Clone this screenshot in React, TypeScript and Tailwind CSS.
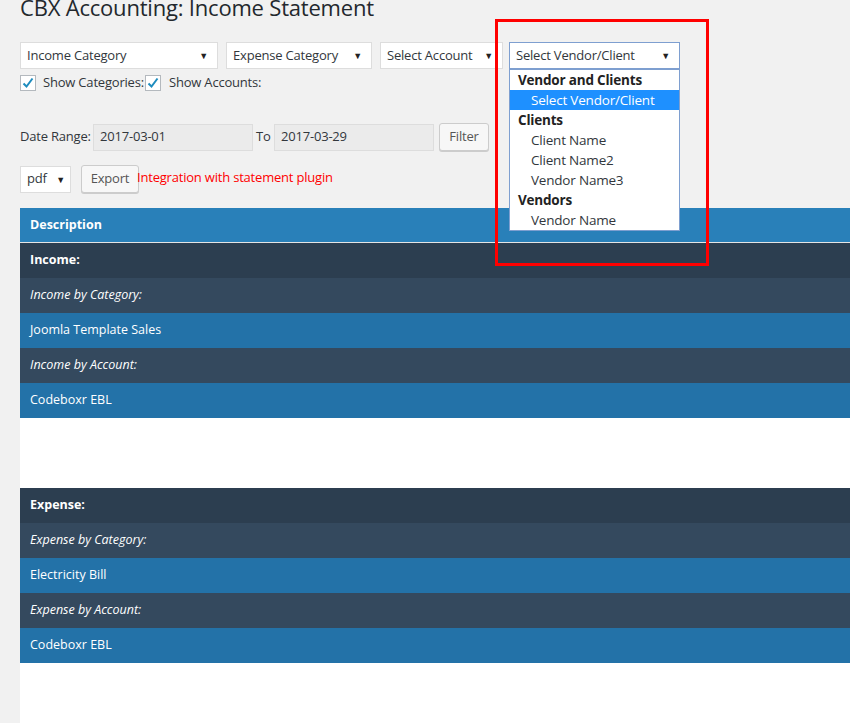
import React from 'react';

const Caret = () => <span className="text-[9px] text-[#222] leading-none">▼</span>;

const Select = ({ label, w, focus }: { label: string; w: string; focus?: boolean }) => (
  <div
    className={`${w} h-[27px] bg-white flex items-center justify-between pl-[6px] pr-[9px] border ${
      focus ? 'border-[#7e9fd0]' : 'border-[#ddd]'
    }`}
  >
    <span className="whitespace-nowrap">{label}</span>
    <Caret />
  </div>
);

const Check = () => (
  <span className="w-4 h-4 shrink-0 bg-white border border-[#b4b9be] flex items-center justify-center">
    <svg width="14" height="14" viewBox="0 0 14 14">
      <path d="M2.5 7.5 L5.5 10.5 L11.5 2.5" fill="none" stroke="#1e8cbe" strokeWidth="2" />
    </svg>
  </span>
);

const rows = [
  { text: 'Income:', kind: 'group' },
  { text: 'Income by Category:', kind: 'sub' },
  { text: 'Joomla Template Sales', kind: 'item' },
  { text: 'Income by Account:', kind: 'sub' },
  { text: 'Codeboxr EBL', kind: 'item' },
  { text: '', kind: 'gap' },
  { text: 'Expense:', kind: 'group' },
  { text: 'Expense by Category:', kind: 'sub' },
  { text: 'Electricity Bill', kind: 'item' },
  { text: 'Expense by Account:', kind: 'sub' },
  { text: 'Codeboxr EBL', kind: 'item' },
];

const rowClass: Record<string, string> = {
  group: 'h-[35px] bg-[#2c3e50] font-bold',
  sub: 'h-[35px] bg-[#34495e] italic',
  item: 'h-[35px] bg-[#2372a8]',
  gap: 'h-[70px] bg-white',
};

const options = [
  { label: 'Vendor and Clients', group: true },
  { label: 'Select Vendor/Client', active: true },
  { label: 'Clients', group: true },
  { label: 'Client Name' },
  { label: 'Client Name2' },
  { label: 'Vendor Name3' },
  { label: 'Vendors', group: true },
  { label: 'Vendor Name' },
];

export default function App() {
  return (
    <div className="relative w-[850px] h-[723px] overflow-hidden bg-[#f1f1f1] font-['Open_Sans',sans-serif] text-[#32373c]">
      <div className="pl-5">
        <h1 className="text-[22px] leading-[29px] -mt-[7px] text-[#23282d] tracking-[-0.2px] whitespace-nowrap">
          CBX Accounting: Income Statement
        </h1>

        <div className="mt-[20px] flex gap-2 text-[13px] tracking-[-0.2px]">
          <Select label="Income Category" w="w-[198px]" />
          <Select label="Expense Category" w="w-[146px]" />
          <Select label="Select Account" w="w-[123px]" />
          <div className="relative ml-[-2px]">
            <Select label="Select Vendor/Client" w="w-[171px]" focus />
            <div className="absolute left-0 top-[27px] w-[171px] bg-white border border-[#7e9fd0] z-10 leading-[20px] text-[13.5px]">
              {options.map((o) => (
                <div
                  key={o.label}
                  className={`h-[20px] ${o.group ? 'pl-[8px] font-bold text-[#222]' : 'pl-[21px]'} ${
                    o.active ? 'bg-[#1e90ff] text-white' : ''
                  }`}
                >
                  {o.label}
                </div>
              ))}
            </div>
          </div>
        </div>

        <div className="mt-[5px] flex items-center text-[13px] tracking-[-0.2px] h-[18px]">
          <Check />
          <span className="ml-[7px] w-[102px] whitespace-nowrap">Show Categories:</span>
          <Check />
          <span className="ml-[8px] whitespace-nowrap">Show Accounts:</span>
        </div>

        <div className="mt-[31px] flex items-center text-[13px] tracking-[-0.2px]">
          <span className="w-[73px] whitespace-nowrap">Date Range:</span>
          <div className="w-[160px] h-[27px] bg-[#ebebeb] border border-[#ddd] flex items-center pl-[6px]">2017-03-01</div>
          <span className="w-[21px] pl-[3px]">To</span>
          <div className="w-[160px] h-[27px] bg-[#ebebeb] border border-[#ddd] flex items-center pl-[6px]">2017-03-29</div>
          <button className="ml-[5px] w-[50px] h-[28px] bg-[#f7f7f7] border border-[#ccc] rounded-[3px] shadow-[0_1px_0_#ccc] text-[#555]">
            Filter
          </button>
        </div>

        <div className="mt-[14px] flex items-center text-[13px] tracking-[-0.2px]">
          <div className="w-[51px] h-[27px] bg-white border border-[#ddd] flex items-center justify-between pl-[6px] pr-[5px]">
            <span>pdf</span>
            <Caret />
          </div>
          <button className="ml-[10px] w-[58px] h-[28px] bg-[#f7f7f7] border border-[#ccc] rounded-[3px] shadow-[0_1px_0_#ccc] text-[#555]">
            Export
          </button>
          <span className="-ml-[2px] -mt-[3px] text-[#ff0000] whitespace-nowrap">Integration with statement plugin</span>
        </div>

        <div className="mt-[15px] text-white text-[12.5px]">
          <div className="h-[35px] bg-[#2980b9] border-b border-[#e5e5e5] font-bold flex items-center pl-[10px]">Description</div>
          {rows.map((r, i) => (
            <div key={i} className={`${rowClass[r.kind]} flex items-center pl-[10px]`}>
              {r.text}
            </div>
          ))}
          <div className="h-[80px] bg-white" />
        </div>
      </div>

      <div className="absolute left-[495px] top-[19px] w-[214px] h-[247px] border-[3px] border-[#ff0000] z-20 pointer-events-none" />
    </div>
  );
}
